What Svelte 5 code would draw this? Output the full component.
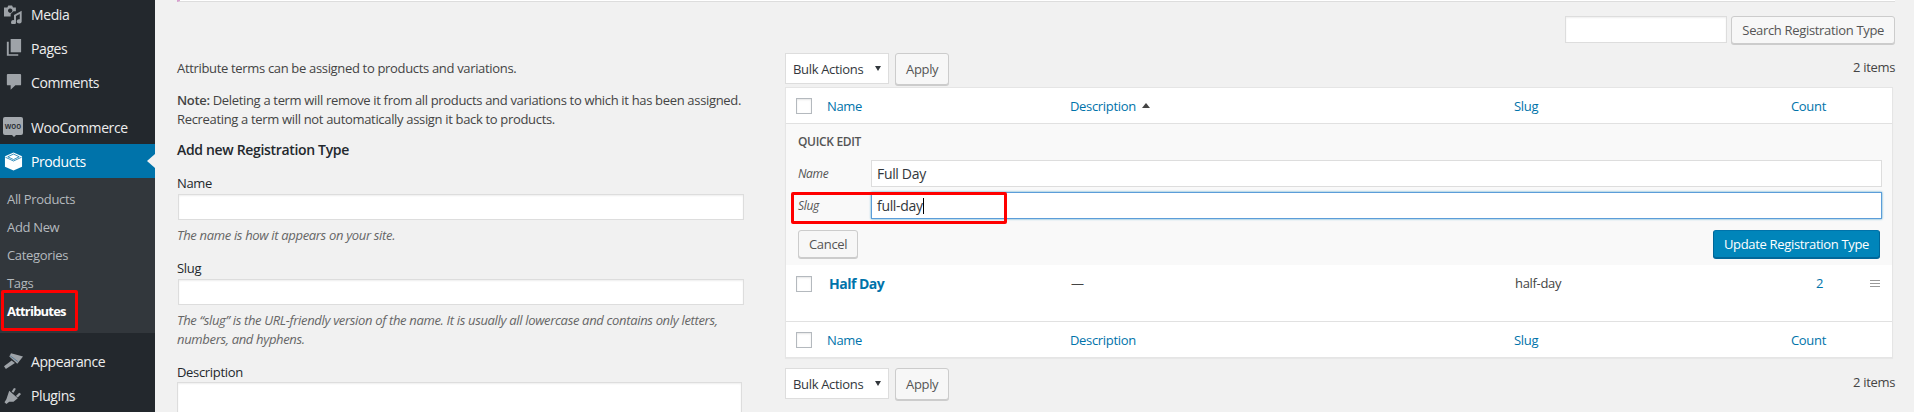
<script>
	const menuTop = [
		{ label: 'Media', icon: 'media' },
		{ label: 'Pages', icon: 'pages' },
		{ label: 'Comments', icon: 'comments' }
	];
	const subItems = ['All Products', 'Add New', 'Categories', 'Tags'];
	const menuBottom = [
		{ label: 'Appearance', icon: 'appearance' },
		{ label: 'Plugins', icon: 'plugins' }
	];
	const columns = ['Name', 'Description', 'Slug', 'Count'];
</script>

{#snippet icon(name)}
	<svg class="menu-icon" viewBox="0 0 20 20" aria-hidden="true">
		{#if name === 'media'}
			<path d="M0 2.500h3.500l1-2h4l1 2h3v4h-2.500L7 9.500V12H0z M6.500 3.700a2.300 2.300 0 1 0 .01 0z" fill-rule="evenodd" />
			<path d="M10.500 10.500L18.600 6v11a2.600 2.300 0 1 1-2-2V9.500l-4 2V18a2.600 2.300 0 1 1-2-2z" />
		{:else if name === 'pages'}
			<path d="M7 0h11v14H7z" />
			<path d="M5 3v13h10v1.500H3V3z" />
		{:else if name === 'comments'}
			<path d="M4 1h13a1 1 0 0 1 1 1v10a1 1 0 0 1-1 1h-5l-5 4.500V13H4a1 1 0 0 1-1-1V2a1 1 0 0 1 1-1z" />
		{:else if name === 'appearance'}
			<path d="M7.400 1.200L20 4.700l-6 7.700L5.600 4.700z" />
			<path d="M8 9l3.500 2.700L2 18l-2-3z" />
			<path d="M6.500 4l8 6" fill="none" stroke="#3b6d91" stroke-width=".7" />
		{:else if name === 'plugins'}
			<path d="M10.500 2l2 1-2.500 4-2-1z" />
			<path d="M16 7l2 1.500-3.500 3.500-2-1.500z" />
			<path d="M5.500 5l9 8-4.500 3.500H5.500L2.500 19l-2-2 2-3z" />
		{/if}
	</svg>
{/snippet}

{#snippet tableHead(sorted)}
	<div class="row head">
		<span class="check"></span>
		{#each columns as col}
			<span class="cell link">{col}{#if sorted && col === 'Description'}<i class="sort-arrow"></i>{/if}</span>
		{/each}
	</div>
{/snippet}

{#snippet bulkBar()}
	<div class="bulk-bar">
		<div class="select">Bulk Actions<i class="caret"></i></div>
		<button class="btn">Apply</button>
		<span class="count-label">2 items</span>
	</div>
{/snippet}

<div class="page">
	<nav class="sidebar">
		{#each menuTop as item}
			<div class="menu-item">{@render icon(item.icon)}<span>{item.label}</span></div>
		{/each}
		<div class="menu-item woo">
			<span class="woo-badge">woo</span>
			<span>WooCommerce</span>
		</div>
		<div class="menu-item current">
			<svg class="menu-icon box" viewBox="0 0 20 20" aria-hidden="true">
				<path d="M10 .5l9 4v11l-9 4-9-4v-11z" fill="#fff" />
				<path d="M10 2.200l6 2.800-6 3-6-3z M1.500 5.500l8.500 4 8.500-4" fill="none" stroke="#0073aa" stroke-width=".8" />
			</svg>
			<span>Products</span>
			<i class="current-arrow"></i>
		</div>
		<div class="submenu">
			{#each subItems as sub}
				<div class="sub-item">{sub}</div>
			{/each}
			<div class="sub-item active">Attributes</div>
			<i class="red-box attr-box"></i>
		</div>
		{#each menuBottom as item}
			<div class="menu-item">{@render icon(item.icon)}<span>{item.label}</span></div>
		{/each}
	</nav>

	<main class="content">
		<div class="notice-edge"></div>
		<div class="search-bar">
			<input class="search-input" type="text" />
			<button class="btn">Search Registration Type</button>
		</div>
		<div class="columns">
			<section class="col-left">
				<p class="intro">Attribute terms can be assigned to products and variations.</p>
				<p class="note"><b>Note:</b> Deleting a term will remove it from all products and variations to which it has been assigned.<br />Recreating a term will not automatically assign it back to products.</p>
				<h3>Add new Registration Type</h3>
				<label for="term-name">Name</label>
				<input id="term-name" type="text" />
				<p class="help">The name is how it appears on your site.</p>
				<label for="term-slug">Slug</label>
				<input id="term-slug" type="text" />
				<p class="help">The “slug” is the URL-friendly version of the name. It is usually all lowercase and contains only letters, numbers, and hyphens.</p>
				<label for="term-desc">Description</label>
				<div id="term-desc" class="textarea"></div>
			</section>

			<section class="col-right">
				{@render bulkBar()}
				<div class="table">
					{@render tableHead(true)}
					<div class="quick-edit">
						<div class="qe-title">QUICK EDIT</div>
						<div class="qe-field">
							<em>Name</em>
							<div class="qe-input">Full Day</div>
						</div>
						<div class="qe-field">
							<em>Slug</em>
							<div class="qe-input focused">full-day<i class="cursor"></i></div>
							<i class="red-box slug-box"></i>
						</div>
						<div class="qe-actions">
							<button class="btn cancel">Cancel</button>
							<button class="btn primary">Update Registration Type</button>
						</div>
					</div>
					<div class="row term">
						<span class="check"></span>
						<span class="cell title">Half Day</span>
						<span class="cell dash">—</span>
						<span class="cell slug-val">half-day</span>
						<span class="cell num">2</span>
						<span class="drag"><i></i><i></i><i></i></span>
					</div>
					<div class="foot-wrap">{@render tableHead(false)}</div>
				</div>
				<div class="bottom-bar">{@render bulkBar()}</div>
			</section>
		</div>
	</main>
</div>

<style>
	:global(body) {
		margin: 0;
		background: #f1f1f1;
	}

	.page {
		display: flex;
		width: 1914px;
		height: 412px;
		overflow: hidden;
		font-family: 'Open Sans', sans-serif;
		font-size: 13px;
		letter-spacing: -0.33px;
		color: #444;
	}

	.sidebar {
		flex: none;
		width: 155px;
		height: 412px;
		background: #23282d;
		color: #eee;
		font-size: 14px;
		letter-spacing: -0.4px;
		overflow: hidden;
	}

	.menu-item {
		display: flex;
		align-items: center;
		height: 34px;
		padding-left: 4px;
		position: relative;
	}

	.menu-item:first-child {
		margin-top: -3px;
	}

	.menu-icon {
		flex: none;
		width: 19px;
		height: 19px;
		margin-right: 8px;
		fill: #9ea3a8;
	}

	.woo {
		margin-top: 11px;
		padding-left: 3px;
	}

	.woo-badge {
		flex: none;
		position: relative;
		width: 20px;
		height: 18px;
		margin: 0 8px 2px 0;
		background: #a4a9ae;
		border-radius: 2px;
		color: #23282d;
		font-size: 8px;
		font-weight: 600;
		letter-spacing: 0;
		line-height: 17px;
		text-align: center;
	}

	.woo-badge::after {
		content: '';
		position: absolute;
		left: 9px;
		top: 18px;
		border: 2px solid transparent;
		border-top-color: #a4a9ae;
	}

	.current {
		background: #0073aa;
		color: #fff;
	}

	.current-arrow {
		position: absolute;
		right: 0;
		top: 10px;
		border: 7px solid transparent;
		border-right: 8px solid #f1f1f1;
		border-left-width: 0;
	}

	.submenu {
		position: relative;
		height: 155px;
		padding-top: 7px;
		box-sizing: border-box;
		background: #32373c;
		color: #b4b9be;
		font-size: 13px;
		letter-spacing: -0.33px;
		margin-bottom: 11px;
	}

	.sub-item {
		height: 28px;
		line-height: 28px;
		padding-left: 7px;
	}

	.sub-item.active {
		color: #fff;
		font-weight: 700;
		letter-spacing: -0.8px;
	}

	.red-box {
		position: absolute;
		border: 3px solid #f00;
		border-radius: 2px;
		box-sizing: border-box;
		pointer-events: none;
	}

	.attr-box {
		left: 1px;
		top: 112px;
		width: 77px;
		height: 41px;
	}

	.content {
		flex: 1;
		min-width: 0;
		padding: 0 19px 0 22px;
	}

	.notice-edge {
		box-sizing: border-box;
		height: 2px;
		background: #fff;
		border-bottom: 1px solid #ddd;
		border-left: 3px solid #d9a0d0;
	}

	.search-bar {
		display: flex;
		justify-content: flex-end;
		gap: 4px;
		margin-top: 14px;
		height: 28px;
	}

	.search-input {
		width: 162px;
	}

	input,
	.textarea {
		display: block;
		box-sizing: border-box;
		margin: 0;
		background: #fff;
		border: 1px solid #ddd;
		box-shadow: inset 0 1px 2px rgba(0, 0, 0, 0.07);
		height: 27px;
		padding: 0;
	}

	.btn {
		box-sizing: border-box;
		height: 28px;
		margin: 0;
		padding: 0 10px;
		font: inherit;
		letter-spacing: inherit;
		color: #555;
		background: #f7f7f7;
		border: 1px solid #ccc;
		border-radius: 3px;
		box-shadow: 0 1px 0 #ccc;
		white-space: nowrap;
	}

	.columns {
		display: flex;
	}

	.col-left {
		flex: none;
		width: 567px;
		margin-right: 41px;
		padding-top: 14px;
	}

	.col-left p {
		margin: 0;
		line-height: 19px;
	}

	.col-left .intro {
		margin-top: 1px;
	}

	.col-left .note {
		margin-top: 13px;
	}

	.col-left b {
		font-weight: 600;
	}

	h3 {
		margin: 11px 0 0;
		font-size: 14px;
		line-height: 19px;
		font-weight: 600;
		color: #23282d;
	}

	label {
		display: block;
		margin-top: 14px;
		line-height: 19px;
		color: #23282d;
	}

	.col-left h3 + label {
		margin-top: 15px;
	}

	.col-left input {
		width: 566px;
		height: 26px;
		margin: 1px 0 0 1px;
	}

	.col-left .help {
		margin-top: 6px;
		font-style: italic;
		color: #666;
	}

	.textarea {
		width: 565px;
		height: 60px;
	}

	.col-right {
		flex: 1;
		min-width: 0;
		padding-top: 9px;
	}

	.bulk-bar {
		display: flex;
		align-items: flex-start;
		gap: 6px;
		height: 34px;
	}

	.select {
		box-sizing: border-box;
		width: 104px;
		height: 31px;
		padding-left: 7px;
		line-height: 31px;
		background: #fff;
		border: 1px solid #ddd;
		color: #32373c;
		position: relative;
	}

	.caret {
		position: absolute;
		right: 7px;
		top: 12px;
		border: 3px solid transparent;
		border-top: 5px solid #32373c;
		border-bottom-width: 0;
	}

	.bulk-bar .btn {
		height: 32px;
	}

	.count-label {
		margin-left: auto;
		line-height: 28px;
		color: #444;
	}

	.table {
		background: #fff;
		border: 1px solid #e5e5e5;
		box-shadow: 0 1px 1px rgba(0, 0, 0, 0.04);
		margin-right: 2px;
		box-sizing: border-box;
	}

	.row {
		display: grid;
		grid-template-columns: 41px 243px 444px 277px 1fr auto;
		align-items: center;
	}

	.head {
		height: 35px;
		border-bottom: 1px solid #e1e1e1;
	}

	.foot-wrap .head {
		border-bottom: 0;
		border-top: 1px solid #e1e1e1;
	}

	.check {
		box-sizing: border-box;
		width: 16px;
		height: 16px;
		margin-left: 10px;
		background: #fff;
		border: 1px solid #b4b9be;
		box-shadow: inset 0 1px 2px rgba(0, 0, 0, 0.1);
	}

	.link {
		color: #0073aa;
	}

	.sort-arrow {
		display: inline-block;
		vertical-align: 3px;
		margin-left: 6px;
		border: 4px solid transparent;
		border-bottom: 5px solid #444;
		border-top-width: 0;
	}

	.quick-edit {
		height: 141px;
		box-sizing: border-box;
		padding: 0 10px 0 12px;
		background: #f9f9f9;
	}

	.qe-title {
		padding-top: 8px;
		font-size: 12px;
		font-weight: 600;
		line-height: 19px;
		color: #555;
	}

	.qe-field {
		display: flex;
		align-items: center;
		height: 26px;
		margin-bottom: 6px;
		position: relative;
	}

	.qe-title + .qe-field {
		margin-top: 9px;
	}

	.qe-field em {
		flex: none;
		width: 73px;
		font-size: 12px;
		color: #555;
	}

	.qe-input {
		flex: 1;
		box-sizing: border-box;
		height: 27px;
		padding-left: 5px;
		line-height: 25px;
		font-size: 14px;
		color: #32373c;
		background: #fff;
		border: 1px solid #ddd;
	}

	.focused {
		border-color: #5b9dd9;
		box-shadow: 0 0 2px rgba(30, 140, 190, 0.8);
	}

	.cursor {
		display: inline-block;
		width: 1px;
		height: 16px;
		vertical-align: -3px;
		background: #000;
	}

	.slug-box {
		left: -7px;
		top: 0;
		width: 216px;
		height: 32px;
	}

	.qe-actions {
		display: flex;
		justify-content: space-between;
		padding-top: 6px;
		padding-right: 2px;
	}

	.primary {
		color: #fff;
		background: #0085ba;
		border-color: #0073aa #006799 #006799;
		box-shadow: 0 1px 0 #006799;
	}

	.term {
		height: 56px;
		align-items: start;
	}

	.term .check {
		margin-top: 11px;
	}

	.term .cell {
		line-height: 19px;
		padding-top: 9px;
	}

	.title {
		margin-left: 2px;
		font-size: 14px;
		font-weight: 700;
		letter-spacing: -0.5px;
		color: #0073aa;
	}

	.dash {
		margin-left: 1px;
	}

	.slug-val {
		margin-left: 1px;
	}

	.num {
		margin-left: 25px;
		color: #0073aa;
	}

	.drag {
		display: flex;
		flex-direction: column;
		gap: 2px;
		margin: 15px 12px 0 0;
	}

	.drag i {
		display: block;
		width: 10px;
		height: 1px;
		background: #999;
	}

	.bottom-bar {
		margin-top: 10px;
	}
</style>
